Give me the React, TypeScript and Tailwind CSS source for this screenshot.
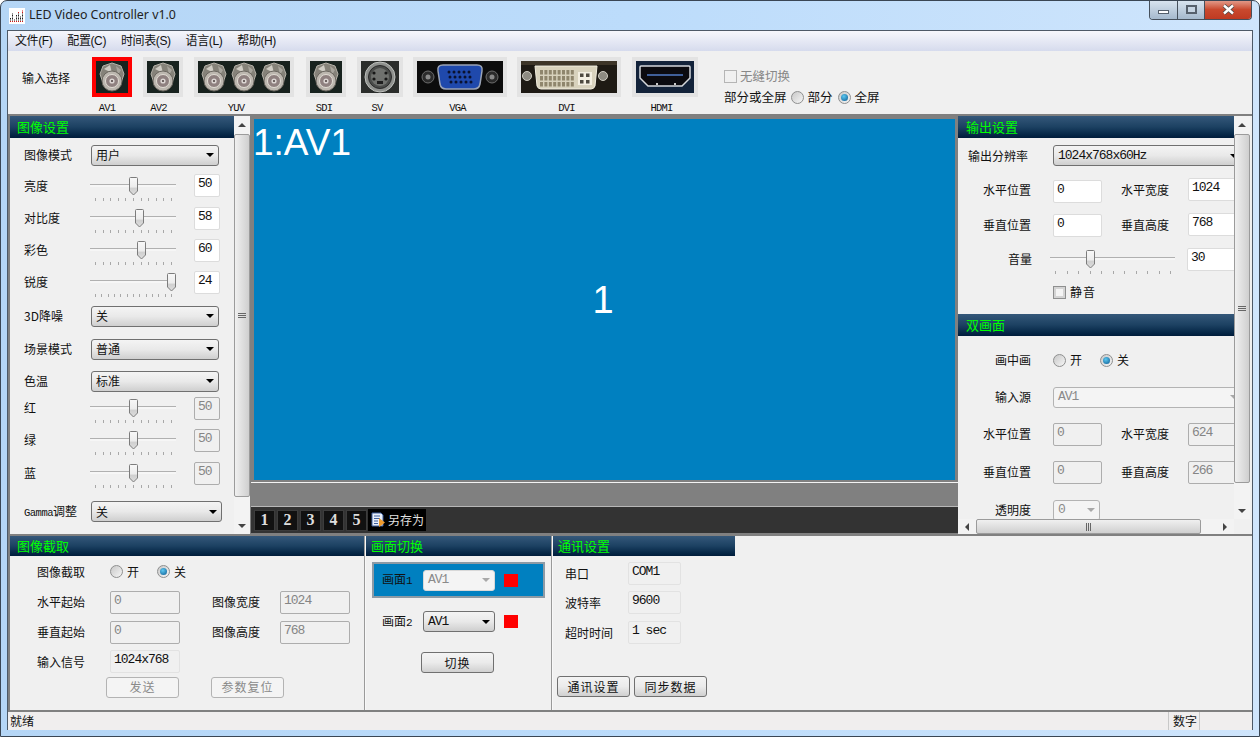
const mono = "font-['Liberation_Mono','Noto_Sans_CJK_SC',monospace]";
const digits = `${mono} text-[13px] tracking-[-1px]`;

function Bnc({ x = 0 }: { x?: number }) {
  return (
    <g transform={`translate(${x} 0)`}>
      <polygon points="16,2 25,5 28,13 25,22 16,25 7,22 4,13 7,5" fill="#858279" stroke="#b5b2a9" strokeWidth="1" />
      <path d="M8 8 L14 4 L16 12 Z" fill="#cfccc4" />
      <path d="M20 5 L25 9 L22 14 Z" fill="#a8a59d" />
      <circle cx="16" cy="20" r="10" fill="#bcb7af" stroke="#6b6760" strokeWidth="1" />
      <circle cx="16" cy="20" r="6.5" fill="#8f8180" stroke="#e2ddd5" strokeWidth="1" />
      <circle cx="16" cy="20" r="2.6" fill="#dcd6d3" />
      <circle cx="16" cy="20" r="1" fill="#4b3f3f" />
    </g>
  );
}

function BncIcon() {
  return (
    <svg width="32" height="32" viewBox="0 0 32 32" className="block">
      <rect width="32" height="32" fill="#18231f" />
      <Bnc />
    </svg>
  );
}

function YuvIcon() {
  return (
    <svg width="92" height="32" viewBox="0 0 92 32" className="block">
      <rect width="92" height="32" fill="#17211d" />
      <Bnc x={0} />
      <Bnc x={30} />
      <Bnc x={60} />
    </svg>
  );
}

function SvIcon() {
  return (
    <svg width="38" height="32" viewBox="0 0 38 32" className="block">
      <rect width="38" height="32" fill="#2b2d2b" />
      <circle cx="19" cy="16" r="15" fill="#8f918e" stroke="#bfc1be" />
      <circle cx="19" cy="16" r="11.5" fill="#4a4c4a" stroke="#2a2a2a" />
      <circle cx="19" cy="16" r="9" fill="#6f716e" />
      <rect x="16" y="20" width="6" height="3" fill="#1e1e1e" />
      <circle cx="13" cy="12" r="1.6" fill="#171717" />
      <circle cx="25" cy="12" r="1.6" fill="#171717" />
      <circle cx="13" cy="18" r="1.6" fill="#171717" />
      <circle cx="25" cy="18" r="1.6" fill="#171717" />
    </svg>
  );
}

function VgaIcon() {
  const rows = [
    { y: 11, xs: [32, 37, 42, 47, 52] },
    { y: 16, xs: [33, 38, 43, 48, 53] },
    { y: 21, xs: [34, 39, 44, 49, 54] },
  ];
  return (
    <svg width="86" height="32" viewBox="0 0 86 32" className="block">
      <rect width="86" height="32" fill="#0c0c0c" />
      <circle cx="11" cy="16" r="6" fill="#2b2b2b" stroke="#6d6d6d" />
      <circle cx="11" cy="16" r="2.5" fill="#8a8a8a" />
      <circle cx="75" cy="16" r="6" fill="#2b2b2b" stroke="#6d6d6d" />
      <circle cx="75" cy="16" r="2.5" fill="#8a8a8a" />
      <path d="M26 4 H60 Q66 4 65 10 L63 23 Q62 28 57 28 H29 Q24 28 23 23 L21 10 Q20 4 26 4 Z" fill="#1f49ac" stroke="#9aa3b5" strokeWidth="1.5" />
      {rows.map((r) =>
        r.xs.map((x) => <circle key={`${r.y}-${x}`} cx={x} cy={r.y} r="1.5" fill="#0a1230" />)
      )}
    </svg>
  );
}

function DviIcon() {
  const pins: number[][] = [];
  for (let r = 0; r < 3; r++) for (let c = 0; c < 8; c++) pins.push([19 + c * 4.4, 9 + r * 6]);
  return (
    <svg width="96" height="32" viewBox="0 0 96 32" className="block">
      <rect width="96" height="32" fill="#1e1a14" />
      <rect y="0" width="96" height="4" fill="#3d3528" />
      <circle cx="6" cy="15" r="4.5" fill="#8e8b82" stroke="#cfccc2" />
      <circle cx="82" cy="15" r="4.5" fill="#8e8b82" stroke="#cfccc2" />
      <path d="M14 5 H76 L74 25 Q73 28 70 28 H20 Q17 28 16 25 Z" fill="#d8d2bd" stroke="#f2eee0" />
      {pins.map(([x, y]) => (
        <rect key={`${x}-${y}`} x={x} y={y} width="3" height="4.5" fill="#8f866d" />
      ))}
      <rect x="57" y="11" width="14" height="13" fill="#f3efe2" />
      <rect x="59" y="12.5" width="3.5" height="3.5" fill="#4e4a40" />
      <rect x="65" y="12.5" width="3.5" height="3.5" fill="#4e4a40" />
      <rect x="59" y="19" width="3.5" height="3.5" fill="#4e4a40" />
      <rect x="65" y="19" width="3.5" height="3.5" fill="#4e4a40" />
    </svg>
  );
}

function HdmiIcon() {
  return (
    <svg width="58" height="32" viewBox="0 0 58 32" className="block">
      <rect width="58" height="32" fill="#13233a" />
      <path d="M4 6 Q4 5 5 5 H53 Q54 5 54 6 V17 L46 25 H12 L4 17 Z" fill="#0b0b10" stroke="#d5d8dc" strokeWidth="1.5" />
      <rect x="11" y="13" width="36" height="2" fill="#3f5f99" />
      <rect x="20" y="22" width="2" height="2" fill="#c8c8c8" />
      <rect x="38" y="22" width="2" height="2" fill="#c8c8c8" />
    </svg>
  );
}

function AppIcon() {
  const cols = [3, 6, 2, 5, 7, 4, 8];
  return (
    <svg width="16" height="16" viewBox="0 0 16 16" className="block">
      <rect width="16" height="16" fill="#fff" />
      {cols.map((n, c) =>
        Array.from({ length: n }).map((_, i) => (
          <rect key={`${c}-${i}`} x={1 + c * 2} y={13 - i * 1.5} width="1" height="1" fill={i > 5 ? "#d01818" : i === 0 ? "#d01818" : "#222"} />
        ))
      )}
    </svg>
  );
}

function Radio({ on }: { on?: boolean }) {
  return (
    <span className="flex w-[13px] h-[13px] shrink-0 items-center justify-center rounded-full border border-[#8e8f8f] bg-linear-to-br from-[#c8c8c8] to-[#f6f6f6]">
      {on && <span className="w-[7px] h-[7px] rounded-full bg-[radial-gradient(circle_at_40%_35%,#5cc8f0,#0b5a92)]" />}
    </span>
  );
}

function RadioPair({ a, b, gap, on }: { a: string; b: string; gap: string; on: number }) {
  return (
    <div className="flex items-center">
      <Radio on={on === 0} />
      <span className="ml-[4px]">{a}</span>
      <span className={gap} />
      <Radio on={on === 1} />
      <span className="ml-[4px]">{b}</span>
    </div>
  );
}

function Check({ disabled }: { disabled?: boolean }) {
  return (
    <span className={`block w-[13px] h-[13px] shrink-0 border ${disabled ? "border-[#b5b5b5] bg-[#f0f0f0]" : "border-[#8e8f8f] bg-[#f4f4f4] shadow-[inset_0_0_0_2px_#d4d4d4]"}`} />
  );
}

function Sel({ text, className, disabled }: { text: string; className: string; disabled?: boolean }) {
  const isLatin = /^[\x00-\x7f]+$/.test(text);
  return (
    <div
      className={`flex items-center justify-between h-[21px] shrink-0 rounded-[3px] border pl-[4px] pr-[4px] ${isLatin ? digits : "text-[12px]"} ${className} ${
        disabled
          ? "border-[#b3b3b3] bg-[#f4f4f4] text-[#8a8a8a]"
          : "border-[#707070] bg-linear-to-b from-[#f4f4f4] via-[#e9e9e9] to-[#cfcfcf] text-[#111]"
      }`}
    >
      <span className="whitespace-nowrap">{text}</span>
      <span className={`w-0 h-0 border-x-[4px] border-x-transparent border-t-[4px] ${disabled ? "border-t-[#a8a8a8]" : "border-t-black"}`} />
    </div>
  );
}

function Field({ text, className, kind = "edit" }: { text: string; className: string; kind?: "edit" | "off" | "ro" }) {
  const look = {
    edit: "bg-white border-[#dcdcdc] text-[#111]",
    off: "bg-[#f0f0f0] border-[#adadad] text-[#858585]",
    ro: "bg-[#f0f0f0] border-[#e2e2e2] text-[#111]",
  }[kind];
  return (
    <div className={`h-[23px] shrink-0 rounded-[2px] border pl-[3px] leading-[18px] ${digits} whitespace-nowrap ${look} ${className}`}>
      {text}
    </div>
  );
}

function Btn({ text, disabled }: { text: string; disabled?: boolean }) {
  return (
    <div
      className={`flex items-center justify-center w-[73px] h-[21px] shrink-0 rounded-[3px] border tracking-[1px] ${
        disabled
          ? "border-[#b3b3b3] bg-[#f4f4f4] text-[#8a8a8a]"
          : "border-[#707070] bg-linear-to-b from-[#f4f4f4] via-[#ebebeb] to-[#d0d0d0] text-[#111]"
      }`}
    >
      {text}
    </div>
  );
}

// thumb = px offset of the thumb centre from the slider's left end
function Slider({ thumb, width, ticks }: { thumb: number; width: number; ticks: number }) {
  return (
    <div className="relative h-[30px] shrink-0" style={{ width }}>
      <div className="absolute left-0 right-0 top-[13px] h-[3px] border-t border-[#b0b0b0] bg-[#f6f6f6]" />
      <svg width="11" height="19" viewBox="0 0 11 19" className="absolute top-[6px]" style={{ left: thumb - 5 }}>
        <defs>
          <linearGradient id="thumbFill" x1="0" y1="0" x2="0" y2="1">
            <stop offset="0" stopColor="#f8f8f8" />
            <stop offset="0.55" stopColor="#ececec" />
            <stop offset="0.6" stopColor="#cfcfcf" />
            <stop offset="1" stopColor="#dedede" />
          </linearGradient>
        </defs>
        <path d="M1.5 1.5 Q1.5 .5 2.5 .5 H8.5 Q9.5 .5 9.5 1.5 V14 L5.5 18 L1.5 14 Z" fill="url(#thumbFill)" stroke="#7c7c7c" />
      </svg>
      <div className="absolute left-[5px] right-[4px] top-[27px] flex justify-between">
        {Array.from({ length: ticks }).map((_, i) => (
          <span key={i} className="block w-px h-[3px] bg-[#a8a8a8]" />
        ))}
      </div>
    </div>
  );
}

function Header({ text, className = "" }: { text: string; className?: string }) {
  return (
    <div className={`flex items-center h-[22px] shrink-0 bg-linear-to-b from-[#35587a] via-[#1c4162] to-[#001c3b] text-[#00ff00] text-[13px] ${className}`}>
      {text}
    </div>
  );
}

function Grip({ vertical = false }: { vertical?: boolean }) {
  return (
    <span className={`flex ${vertical ? "flex-col w-[8px] gap-[1px]" : "h-[8px] gap-[1px]"}`}>
      {[0, 1, 2].map((i) => (
        <span key={i} className={vertical ? "block h-px w-full bg-[#666]" : "block w-px h-full bg-[#666]"} />
      ))}
    </span>
  );
}

function VScroll({ thumb, className = "" }: { thumb: string; className?: string }) {
  return (
    <div className={`flex flex-col items-center w-[16px] shrink-0 bg-[#f3f3f3] ${className}`}>
      <div className="flex items-center justify-center w-full h-[18px] shrink-0">
        <span className="w-0 h-0 border-x-[4px] border-x-transparent border-b-[4px] border-b-[#444]" />
      </div>
      <div className={`flex items-center justify-center w-full shrink-0 rounded-[2px] border border-[#9b9b9b] bg-linear-to-r from-[#f0f0f0] to-[#cfcfcf] ${thumb}`}>
        <Grip vertical />
      </div>
      <div className="flex-1" />
      <div className="flex items-center justify-center w-full h-[17px] shrink-0">
        <span className="w-0 h-0 border-x-[4px] border-x-transparent border-t-[4px] border-t-[#444]" />
      </div>
    </div>
  );
}

function LeftPanel() {
  const val = "ml-[18px] w-[26px]";
  const label = "w-[81px] shrink-0 pl-[14px] whitespace-nowrap";
  const sliderRow = (name: string, thumb: number, value: string, ticks: number, off?: boolean) => (
    <div className="flex items-center">
      <span className={label}>{name}</span>
      <span className="-ml-[1px]">
        <Slider thumb={thumb} width={86} ticks={ticks} />
      </span>
      <Field text={value} kind={off ? "off" : "edit"} className={val} />
    </div>
  );
  const selRow = (name: string, value: string) => (
    <div className="flex items-center">
      <span className={label}>{name}</span>
      <Sel text={value} className="w-[128px]" />
    </div>
  );
  return (
    <div className="flex w-[240px] shrink-0 h-full">
      <div className="flex flex-col w-[224px] shrink-0 overflow-hidden">
        <Header text="图像设置" className="pl-[7px]" />
        <div className="grid grid-rows-[34px_27px_38px_26px_38px_30px_36px_28px_26px_38px_28px_49px]">
          {selRow("图像模式", "用户")}
          {sliderRow("亮度", 43, "50", 11)}
          {sliderRow("对比度", 49, "58", 11)}
          {sliderRow("彩色", 51, "60", 11)}
          {sliderRow("锐度", 81, "24", 13)}
          {selRow("3D降噪", "关")}
          {selRow("场景模式", "普通")}
          {selRow("色温", "标准")}
          {sliderRow("红", 43, "50", 11, true)}
          {sliderRow("绿", 43, "50", 11, true)}
          {sliderRow("蓝", 43, "50", 11, true)}
          <div className="flex items-center">
            <span className={label}>
              <span className={`${mono} text-[10.5px] tracking-[-0.5px]`}>Gamma</span>调整
            </span>
            <Sel text="关" className="w-[131px]" />
          </div>
        </div>
        <div className="flex gap-[60px] pl-[14px] -mt-[2px]">
          <Check />
          <Check />
        </div>
      </div>
      <VScroll thumb="h-[363px]" />
    </div>
  );
}

function Preview() {
  const tabs = ["1", "2", "3", "4", "5"];
  return (
    <div className="flex flex-col flex-1 min-w-0 h-full bg-[#808080] pl-[1px]">
      <div className="relative h-[361px] shrink-0 mx-[3px] mt-[3px] bg-[#0080c0] text-white font-['Liberation_Sans',sans-serif] flex items-center justify-center">
        <span className="absolute left-[-1px] top-[3px] text-[37px] leading-[42px]">1:AV1</span>
        <span className="text-[38px] leading-none mr-[3px]">1</span>
      </div>
      <div className="h-[1px] mt-[2px] bg-[#f4f4f4] shrink-0" />
      <div className="flex-1" />
      <div className="flex items-center h-[28px] shrink-0 bg-[#333333] border-t border-[#b8b8b8] border-b border-b-[#808080] pl-[3px] gap-[2px]">
        {tabs.map((t) => (
          <div key={t} className="flex items-center justify-center w-[21px] h-[21px] bg-[#111] border border-[#3c3c3c] text-[#dddddd] text-[16px] font-bold font-['Liberation_Serif',serif]">
            {t}
          </div>
        ))}
        <div className="flex items-center -ml-[1px] w-[58px] h-[22px] bg-black text-[#e0e0e0] pl-[3px] gap-[2px]">
          <svg width="15" height="16" viewBox="0 0 15 16" className="shrink-0">
            <path d="M1 1 H10 L12 3 V14 H1 Z" fill="#e8eef8" stroke="#3f5f9c" />
            <path d="M3 4 H9 M3 6.5 H9 M3 9 H7 M3 11.5 H7" stroke="#3f5f9c" />
            <path d="M8 6 L14 10.5 L8 15 Z" fill="#ef9a2c" />
          </svg>
          <span className="whitespace-nowrap">另存为</span>
        </div>
      </div>
    </div>
  );
}

function RightPanel() {
  const label = "w-[73px] shrink-0 text-right whitespace-nowrap";
  const label2 = "ml-[19px] w-[48px] shrink-0 whitespace-nowrap";
  const pair = (a: string, av: string, b: string, bv: string, kind: "edit" | "off", left = "", right = "") => (
    <div className="flex items-center">
      <span className={label}>{a}</span>
      <Field text={av} kind={kind} className={`ml-[22px] w-[49px] ${left}`} />
      <span className={label2}>{b}</span>
      <Field text={bv} kind={kind} className={`ml-[19px] w-[60px] ${right}`} />
    </div>
  );
  return (
    <div className="flex w-[292px] shrink-0 h-full">
      <div className="flex flex-col w-[276px] shrink-0 h-full">
        <div className="flex-1 min-h-0 overflow-hidden">
          <Header text="输出设置" className="pl-[8px]" />
          <div className="grid grid-rows-[35px_34px_35px_34px_32px] h-[170px]">
            <div className="flex items-center">
              <span className="w-[95px] shrink-0 pl-[10px] whitespace-nowrap">输出分辨率</span>
              <Sel text="1024x768x60Hz" className="w-[190px]" />
            </div>
            {pair("水平位置", "0", "水平宽度", "1024", "edit", "mt-[2px]", "mb-[2px]")}
            {pair("垂直位置", "0", "垂直高度", "768", "edit", "mt-[1px]", "mb-[1px]")}
            <div className="flex items-center">
              <span className="w-[74px] shrink-0 text-right">音量</span>
              <span className="ml-[18px]">
                <Slider thumb={40} width={125} ticks={11} />
              </span>
              <Field text="30" className="ml-[12px] w-[60px]" />
            </div>
            <div className="flex items-center pl-[95px]">
              <Check />
              <span className="ml-[4px] tracking-[1px]">静音</span>
            </div>
          </div>
          <Header text="双画面" className="mt-[6px] pl-[8px]" />
          <div className="grid grid-rows-[48px_26px_48px_28px_48px]">
            <div className="flex items-center">
              <span className={label}>画中画</span>
              <span className="ml-[22px]">
                <RadioPair a="开" b="关" gap="w-[18px]" on={1} />
              </span>
            </div>
            <div className="flex items-center">
              <span className={label}>输入源</span>
              <Sel text="AV1" disabled className="ml-[22px] w-[190px]" />
            </div>
            {pair("水平位置", "0", "水平宽度", "624", "off")}
            {pair("垂直位置", "0", "垂直高度", "266", "off")}
            <div className="flex items-center">
              <span className={label}>透明度</span>
              <Sel text="0" disabled className="ml-[22px] w-[47px]" />
            </div>
          </div>
        </div>
        <div className="flex items-center h-[15px] shrink-0 bg-[#f3f3f3]">
          <span className="flex items-center justify-center w-[18px] shrink-0">
            <span className="w-0 h-0 border-y-[4px] border-y-transparent border-r-[4px] border-r-[#444]" />
          </span>
          <div className="flex items-center justify-center w-[225px] h-[15px] rounded-[2px] border border-[#9b9b9b] bg-linear-to-b from-[#f0f0f0] to-[#cfcfcf]">
            <Grip />
          </div>
          <div className="flex-1" />
          <span className="flex items-center justify-center w-[18px] shrink-0">
            <span className="w-0 h-0 border-y-[4px] border-y-transparent border-l-[4px] border-l-[#444]" />
          </span>
        </div>
      </div>
      <VScroll thumb="h-[349px]" className="h-[403px]" />
    </div>
  );
}

function CapturePanel() {
  const label = "w-[100px] shrink-0 pl-[27px] whitespace-nowrap";
  const label2 = "ml-[32px] w-[48px] shrink-0 whitespace-nowrap";
  return (
    <div className="flex flex-col w-[354px] shrink-0">
      <Header text="图像截取" className="h-[20px]! pl-[7px]" />
      <div className="grid grid-rows-[31px_30px_30px_29px_22px]">
        <div className="flex items-center">
          <span className={label}>图像截取</span>
          <RadioPair a="开" b="关" gap="w-[18px]" on={1} />
        </div>
        <div className="flex items-center">
          <span className={label}>水平起始</span>
          <Field text="0" kind="off" className="w-[70px]" />
          <span className={label2}>图像宽度</span>
          <Field text="1024" kind="off" className="ml-[20px] w-[70px]" />
        </div>
        <div className="flex items-center">
          <span className={label}>垂直起始</span>
          <Field text="0" kind="off" className="w-[70px]" />
          <span className={label2}>图像高度</span>
          <Field text="768" kind="off" className="ml-[20px] w-[70px]" />
        </div>
        <div className="flex items-center">
          <span className={label}>输入信号</span>
          <Field text="1024x768" kind="ro" className="w-[70px]" />
        </div>
        <div className="flex items-center pl-[96px] gap-[32px]">
          <Btn text="发送" disabled />
          <Btn text="参数复位" disabled />
        </div>
      </div>
    </div>
  );
}

function SwitchPanel() {
  return (
    <div className="flex flex-col w-[185px] shrink-0">
      <Header text="画面切换" className="h-[20px]! pl-[5px]" />
      <div className="flex items-center ml-[6px] mt-[6px] w-[173px] h-[36px] border-2 border-[#8c9aa5] bg-[#0080c0] pl-[8px]">
        <span className="w-[41px] shrink-0">
          画面<span className={`${mono} text-[11px]`}>1</span>
        </span>
        <Sel text="AV1" disabled className="w-[72px] border-[#d8d8d8]!" />
        <span className="block ml-[9px] w-[14px] h-[13px] bg-[#ff0000]" />
      </div>
      <div className="flex items-center mt-[13px] pl-[16px]">
        <span className="w-[41px] shrink-0">
          画面<span className={`${mono} text-[11px]`}>2</span>
        </span>
        <Sel text="AV1" className="w-[72px]" />
        <span className="block ml-[9px] w-[14px] h-[13px] bg-[#ff0000]" />
      </div>
      <div className="mt-[20px] ml-[55px]">
        <Btn text="切换" />
      </div>
    </div>
  );
}

function CommPanel() {
  const row = (name: string, value: string, mt: string) => (
    <div className={`flex items-center pl-[12px] ${mt}`}>
      <span className="w-[63px] shrink-0 whitespace-nowrap">{name}</span>
      <Field text={value} kind="ro" className="w-[53px]" />
    </div>
  );
  return (
    <div className="flex flex-col w-[182px] shrink-0">
      <Header text="通讯设置" className="h-[20px]! pl-[5px]" />
      {row("串口", "COM1", "mt-[6px]")}
      {row("波特率", "9600", "mt-[6px]")}
      {row("超时时间", "1 sec", "mt-[7px]")}
      <div className="flex gap-[4px] pl-[4px] mt-[32px]">
        <Btn text="通讯设置" />
        <Btn text="同步数据" />
      </div>
    </div>
  );
}

function Divider() {
  return <div className="w-[2px] shrink-0 bg-[#f8f8f8] border-l border-[#9a9a9a]" />;
}

const inputs = [
  { name: "AV1", icon: <BncIcon />, ml: "ml-[22px]", bg: "bg-[#ff0000]", lbl: "mr-[10px]" },
  { name: "AV2", icon: <BncIcon />, ml: "ml-[11px]", bg: "bg-[#e3e3e3]", lbl: "mr-[9px]" },
  { name: "YUV", icon: <YuvIcon />, ml: "ml-[11px]", bg: "bg-[#e3e3e3]", lbl: "mr-[16px]" },
  { name: "SDI", icon: <BncIcon />, ml: "ml-[12px]", bg: "bg-[#e3e3e3]", lbl: "mr-[4px]" },
  { name: "SV", icon: <SvIcon />, ml: "ml-[11px]", bg: "bg-[#e3e3e3]", lbl: "mr-[6px]" },
  { name: "VGA", icon: <VgaIcon />, ml: "ml-[10px]", bg: "bg-[#e3e3e3]", lbl: "mr-[5px]" },
  { name: "DVI", icon: <DviIcon />, ml: "ml-[10px]", bg: "bg-[#e3e3e3]", lbl: "mr-[5px]" },
  { name: "HDMI", icon: <HdmiIcon />, ml: "ml-[11px]", bg: "bg-[#e3e3e3]", lbl: "mr-[7px]" },
];

export default function App() {
  return (
    <div className="flex flex-col w-[1260px] h-[737px] overflow-hidden rounded-t-[7px] border border-[#3a4654] bg-linear-to-r from-[#b5d6f6] via-[#bcdcfb] to-[#cfe5fc] text-[12px] text-[#111] font-['Noto_Sans_CJK_SC','Noto_Sans',sans-serif]">
      {/* title bar */}
      <div className="relative flex items-center h-[29px] shrink-0 pl-[8px]">
        <AppIcon />
        <span className="ml-[4px] text-[12.4px] font-['Noto_Sans',sans-serif] text-[#222]">LED Video Controller v1.0</span>
        <div className="absolute right-[7px] top-[-1px] flex h-[20px] rounded-b-[4px] border border-t-0 border-[#46505c] overflow-hidden">
          <div className="flex items-center justify-center w-[28px] border-r border-[#46505c] bg-linear-to-b from-[#dbe6f1] to-[#a5b9cd]">
            <span className="block w-[11px] h-[4px] mt-[4px] bg-white border border-[#555f6b]" />
          </div>
          <div className="flex items-center justify-center w-[27px] border-r border-[#46505c] bg-linear-to-b from-[#dbe6f1] to-[#a5b9cd]">
            <span className="block w-[11px] h-[9px] border-2 border-[#56606c] bg-[#c6d4e2]" />
          </div>
          <div className="flex items-center justify-center w-[46px] bg-linear-to-b from-[#e3a090] via-[#c9492e] to-[#bf3a22]">
            <svg width="13" height="11" viewBox="0 0 13 11">
              <path d="M2 1.5 L11 9.5 M11 1.5 L2 9.5" stroke="#4b4b4b" strokeWidth="4" />
              <path d="M2 1.5 L11 9.5 M11 1.5 L2 9.5" stroke="#fff" strokeWidth="2.4" />
            </svg>
          </div>
        </div>
      </div>

      <div className="flex flex-col h-[700px] shrink-0 mx-[6px] border border-[#4d5967] bg-[#f0f0f0]">
        {/* menu */}
        <div className="flex items-center gap-[15px] h-[20px] shrink-0 pl-[7px] tracking-[-0.4px] bg-linear-to-b from-[#f6f7fc] to-[#d6dbed] font-['Liberation_Sans','Noto_Sans_CJK_SC',sans-serif]">
          {["文件(F)", "配置(C)", "时间表(S)", "语言(L)", "帮助(H)"].map((m) => (
            <span key={m}>{m}</span>
          ))}
        </div>

        {/* input toolbar */}
        <div className="flex items-start h-[65px] shrink-0 pl-[14px] border-b-2 border-[#808080]">
          <span className="mt-[18px] w-[48px] shrink-0 whitespace-nowrap">输入选择</span>
          {inputs.map((it) => (
            <div key={it.name} className={`flex flex-col items-center mt-[6px] shrink-0 ${it.ml}`}>
              <div className={`p-[4px] ${it.bg}`}>{it.icon}</div>
              <span className={`mt-[5px] ${mono} text-[10.5px] tracking-[-0.8px] leading-[12px] ${it.lbl}`}>{it.name}</span>
            </div>
          ))}
          <div className="flex flex-col ml-[26px] mt-[16px] text-[12.5px] leading-[18px]">
            <div className="flex items-center text-[#888]">
              <Check disabled />
              <span className="ml-[3px]">无缝切换</span>
            </div>
            <div className="flex items-center mt-[3px]">
              <span className="whitespace-nowrap">部分或全屏</span>
              <span className="ml-[4px]">
                <RadioPair a="部分" b="全屏" gap="w-[5px]" on={1} />
              </span>
            </div>
          </div>
        </div>

        {/* main */}
        <div className="flex h-[418px] shrink-0 border-l-2 border-[#808080] pr-[2px]">
          <LeftPanel />
          <Preview />
          <RightPanel />
        </div>

        {/* bottom panels */}
        <div className="flex h-[176px] shrink-0 border-t-2 border-l-2 border-[#808080]">
          <CapturePanel />
          <Divider />
          <SwitchPanel />
          <Divider />
          <CommPanel />
        </div>

        {/* status bar */}
        <div className="flex items-center flex-1 border-t-2 border-[#808080] bg-[#f0eeee] pl-[2px]">
          <span className="flex-1">就绪</span>
          <span className="h-full w-[32px] border-x border-[#c8c8c8] pl-[4px]">数字</span>
          <span className="w-[52px]" />
        </div>
      </div>
    </div>
  );
}
